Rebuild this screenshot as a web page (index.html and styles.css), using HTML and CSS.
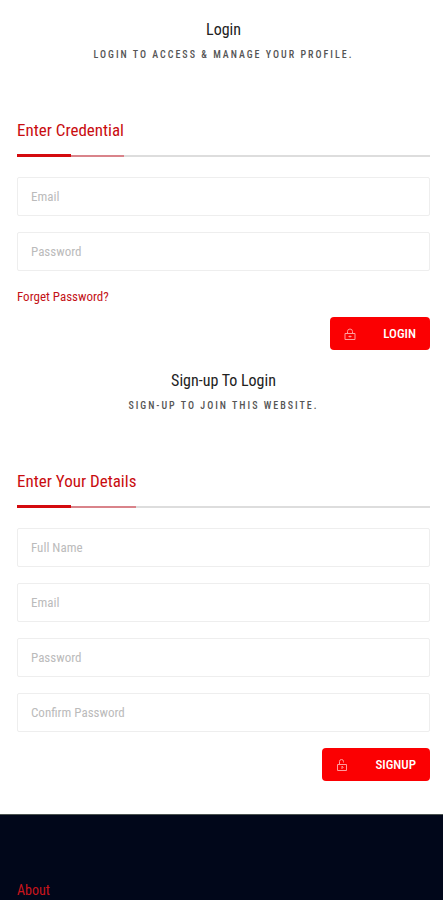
FILE: index.html
```html
<!DOCTYPE html>
<html lang="en">

<head>
    <meta charset="UTF-8" />
    <meta name="viewport" content="width=device-width, initial-scale=1.0" />
    <title>Login</title>
    <link rel="stylesheet" href="styles.css">
</head>

<body>
    <main class="main">
        <section class="account">
            <div class="section-title">
                <h1>Login</h1>
                <p>Login to access &amp; manage your profile.</p>
            </div>
            <form class="account-form">
                <div class="form-header">
                    <h2>Enter Credential</h2>
                </div>
                <input class="field" type="email" placeholder="Email" aria-label="Email">
                <input class="field" type="password" placeholder="Password" aria-label="Password">
                <a class="forget" href="#">Forget Password?</a>
                <button class="btn" type="submit">
                    <svg class="btn-icon" viewBox="0 0 12 12" aria-hidden="true">
                        <path d="M1 5.5h10v6H1zM3.5 5.5v-2a2.5 2.5 0 0 1 5 0v2M6 7.5v2M4.5 8.5h3" />
                    </svg>
                    Login
                </button>
            </form>
        </section>

        <section class="account">
            <div class="section-title">
                <h1>Sign-up To Login</h1>
                <p>Sign-up to join this website.</p>
            </div>
            <form class="account-form">
                <div class="form-header">
                    <h2>Enter Your Details</h2>
                </div>
                <input class="field" type="text" placeholder="Full Name" aria-label="Full Name">
                <input class="field" type="email" placeholder="Email" aria-label="Email">
                <input class="field" type="password" placeholder="Password" aria-label="Password">
                <input class="field" type="password" placeholder="Confirm Password" aria-label="Confirm Password">
                <button class="btn" type="submit">
                    <svg class="btn-icon" viewBox="0 0 12 12" aria-hidden="true">
                        <path d="M1.5 5.5h9v6h-9zM3.5 5.5v-3a2 2 0 0 1 4 0v1M6 7v3M6 7.5l1.500 1" />
                    </svg>
                    Signup
                </button>
            </form>
        </section>
    </main>

    <footer class="footer">
        <h3>About</h3>
    </footer>
</body>

</html>
```

FILE: styles.css
```css
* {
    box-sizing: border-box;
}

body {
    margin: 0;
    font-family: "Roboto Condensed", Roboto, sans-serif;
    font-size: 13px;
    color: #222;
    background-color: #fff;
}

h1,
h2,
h3,
p {
    margin: 0;
    font-weight: 400;
}

.main {
    padding: 20px 13px 33px 17px;
}

.account {
    margin-bottom: 21px;
}

.account:last-child {
    margin-bottom: 0;
}

.section-title {
    text-align: center;
    margin-bottom: 56px;
}

.section-title h1 {
    font-size: 16px;
    line-height: 20px;
    margin-bottom: 7px;
}

.section-title p {
    font-size: 10px;
    line-height: 16px;
    font-weight: 500;
    letter-spacing: 2px;
    text-transform: uppercase;
    color: #555;
}

.account-form {
    display: flex;
    flex-direction: column;
    align-items: flex-start;
}

.form-header {
    width: 100%;
    margin-bottom: 20px;
    border-bottom: 2px solid #ddd;
}

.form-header h2 {
    position: relative;
    width: fit-content;
    margin-bottom: -2px;
    padding-bottom: 14px;
    border-bottom: 2px solid #d9838a;
    font-size: 17px;
    line-height: 22px;
    color: #c90c0f;
}

.form-header h2::after {
    content: "";
    position: absolute;
    left: 0;
    bottom: -2px;
    width: 54px;
    height: 3px;
    background-color: #d40a0e;
}

.field {
    width: 100%;
    height: 39px;
    margin-bottom: 16px;
    padding: 0 13px;
    border: 1px solid #eee;
    border-radius: 2px;
    background-color: #fff;
    font: inherit;
    color: #444;
}

.field::placeholder {
    color: #bbb;
}

.forget {
    margin-bottom: 10px;
    line-height: 20px;
    color: #c41218;
    text-decoration: none;
}

.btn {
    display: flex;
    align-items: center;
    align-self: flex-end;
    gap: 27px;
    height: 33px;
    padding: 0 14px;
    border: 0;
    border-radius: 4px;
    background-color: #fb0002;
    font: inherit;
    font-weight: 500;
    text-transform: uppercase;
    color: #fff;
}

.btn-icon {
    width: 12px;
    height: 12px;
    fill: none;
    stroke: #ff9c9c;
    stroke-width: 1;
}

.footer {
    padding: 65px 17px 4px;
    border-top: 1px solid #4b5350;
    background-color: #01071a;
}

.footer h3 {
    font-size: 14px;
    line-height: 20px;
    color: #c9151c;
}
```
